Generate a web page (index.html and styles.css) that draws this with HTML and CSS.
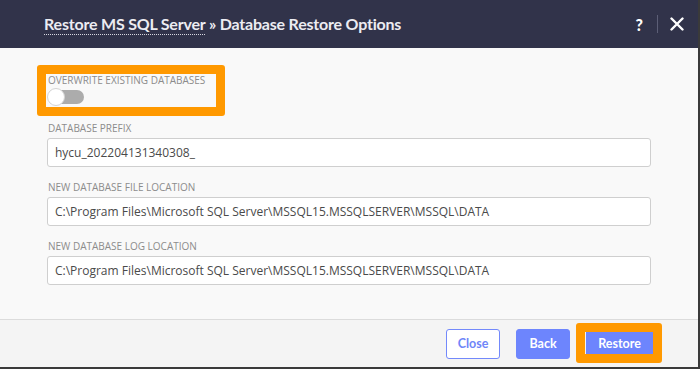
FILE: index.html
```html
<!DOCTYPE html>
<html>
<head>
<meta charset="utf-8">
<link rel="stylesheet" href="styles.css">
</head>
<body>
<div class="dialog">
  <div class="header">
    <div class="title"><span class="crumb">Restore MS SQL Server</span> » Database Restore Options</div>
    <div class="tools">
      <span class="help">?</span>
      <span class="sep"></span>
      <svg class="close-x" width="14" height="14" viewBox="0 0 14 14"><path d="M1.5 1.5 L12.5 12.5 M12.5 1.5 L1.5 12.5" stroke="#ffffff" stroke-width="2.4" stroke-linecap="round"/></svg>
    </div>
  </div>
  <div class="content">
    <div class="field toggle-field">
      <div class="label">Overwrite existing databases</div>
      <div class="toggle"><span class="knob"></span></div>
      <span class="mark mark-toggle"></span>
    </div>
    <div class="field">
      <div class="label">Database prefix</div>
      <div class="input">hycu_202204131340308_</div>
    </div>
    <div class="field">
      <div class="label">New database file location</div>
      <div class="input">C:\Program Files\Microsoft SQL Server\MSSQL15.MSSQLSERVER\MSSQL\DATA</div>
    </div>
    <div class="field">
      <div class="label">New database log location</div>
      <div class="input">C:\Program Files\Microsoft SQL Server\MSSQL15.MSSQLSERVER\MSSQL\DATA</div>
    </div>
  </div>
  <div class="footer">
    <button class="btn btn-outline">Close</button>
    <button class="btn btn-primary">Back</button>
    <div class="restore-wrap">
      <button class="btn btn-primary">Restore</button>
      <span class="mark mark-restore"></span>
    </div>
  </div>
</div>
</body>
</html>
```
FILE: styles.css
```css
html, body {
  margin: 0;
  padding: 0;
  background: #3a3a3a;
}
.dialog {
  width: 698px;
  height: 367px;
  background: #f9f9f9;
  display: flex;
  flex-direction: column;
  font-family: "Open Sans", sans-serif;
}
.header {
  height: 48px;
  background: #31334a;
  display: flex;
  align-items: center;
  justify-content: space-between;
  padding: 0 14px 0 44px;
  box-sizing: border-box;
  flex: none;
}
.title {
  font-family: Lato, "Open Sans", sans-serif;
  font-weight: 700;
  font-size: 16px;
  color: #ececf2;
  letter-spacing: -0.2px;
  margin-top: -2px;
}
.crumb {
  border-bottom: 1px dotted #d8d8e0;
  padding-bottom: 1px;
}
.tools {
  display: flex;
  align-items: center;
}
.help {
  font-family: Lato, sans-serif;
  font-weight: 900;
  font-size: 16px;
  color: #ffffff;
  margin-right: 14px;
}
.sep {
  width: 1px;
  height: 18px;
  background: #5c5e76;
  margin-right: 12px;
}
.close-x {
  display: block;
}
.content {
  flex: 1;
  padding: 25px 47px 0 47px;
}
.field {
  margin-bottom: 13px;
}
.toggle-field {
  position: relative;
  margin-bottom: 17px;
}
.label {
  font-size: 10px;
  line-height: 14px;
  color: #8c8c8c;
  text-transform: uppercase;
  margin-bottom: 3px;
  padding-left: 1px;
}
.toggle {
  position: relative;
  width: 36px;
  height: 14px;
  margin-top: 0;
  background: #acacac;
  border-radius: 7px;
  margin-left: 1px;
}
.knob {
  position: absolute;
  left: -1px;
  top: -2px;
  width: 16px;
  height: 16px;
  border-radius: 50%;
  background: #ffffff;
  border: 1px solid #d4d4d4;
}
.input {
  height: 29px;
  box-sizing: border-box;
  background: #ffffff;
  border: 1px solid #cfcfcf;
  border-radius: 3px;
  font-size: 12px;
  line-height: 27px;
  color: #4a4a4a;
  padding-left: 7px;
}
.mark {
  position: absolute;
  border: 9px solid #ff9900;
  border-radius: 3px;
  pointer-events: none;
}
.mark-toggle {
  left: -10px;
  top: -8px;
  width: 170px;
  height: 33px;
}
.footer {
  flex: none;
  height: 48px;
  box-sizing: border-box;
  border-top: 1px solid #dcdcdc;
  background: #f4f4f4;
  display: flex;
  align-items: center;
  justify-content: flex-end;
  gap: 16px;
  padding: 0 45px 0 0;
}
.btn {
  font-family: Lato, "Open Sans", sans-serif;
  font-weight: 700;
  font-size: 12.5px;
  height: 30px;
  border-radius: 3px;
  padding: 0;
  margin: 0;
  box-sizing: border-box;
  cursor: pointer;
}
.btn-outline {
  width: 54px;
  background: #ffffff;
  border: 1px solid #7389fb;
  color: #6f86f8;
}
.btn-primary {
  width: 54px;
  background: #6d85fd;
  border: 1px solid #6d85fd;
  color: #ffffff;
}
.restore-wrap {
  position: relative;
}
.restore-wrap .btn-primary {
  width: 67px;
  display: block;
}
.mark-restore {
  left: -10px;
  top: -6px;
  width: 68px;
  height: 22px;
}
```
